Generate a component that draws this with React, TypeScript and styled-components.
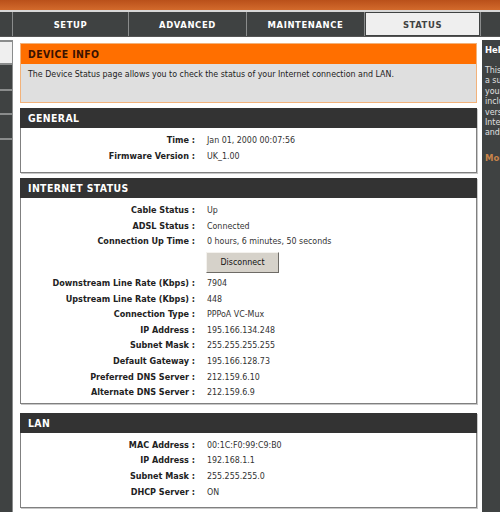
import React from "react";
import styled, { createGlobalStyle } from "styled-components";

const GlobalStyle = createGlobalStyle`
  html, body {
    margin: 0;
    padding: 0;
    background: #ffffff;
    overflow: hidden;
  }
  body {
    font-family: "DejaVu Sans Condensed", "DejaVu Sans", sans-serif;
    font-size: 8.8px;
    color: #222;
  }
`;

const Page = styled.div`
  width: 660px;
`;

const TopBar = styled.div`
  height: 10px;
  background: linear-gradient(#b9501a, #d26a2c);
  border-bottom: 2px solid #d8d8d8;
`;

const NavRow = styled.nav`
  display: grid;
  grid-template-columns: 12px 115px 117px 117px 115px 1fr;
  gap: 1px;
  height: 24px;
  background: #8a8c8c;
  border-bottom: 1px solid #555;
`;

const Tab = styled.div<{ $active?: boolean }>`
  display: flex;
  align-items: center;
  justify-content: center;
  background: ${({ $active }) => ($active ? "#efefef" : "#3f4242")};
  color: ${({ $active }) => ($active ? "#3f4242" : "#ffffff")};
  font-weight: bold;
  font-size: 9.4px;
  letter-spacing: 0.6px;
  ${({ $active }) => $active && "box-shadow: inset 0 0 0 1px #3f4242;"}
`;

const Body = styled.div`
  display: grid;
  grid-template-columns: 13px 458px 140px;
  column-gap: 6px;
  align-items: stretch;
  padding-top: 3px;
  height: 480px;
`;

const Sidebar = styled.aside`
  background: #3f4242;
  border-right: 1px solid #8a8c8c;
  display: flex;
  flex-direction: column;
`;

const SideItem = styled.div<{ $active?: boolean; $h: number }>`
  height: ${({ $h }) => $h}px;
  background: ${({ $active }) => ($active ? "#efefef" : "#3f4242")};
  border-bottom: 2px solid #8a8c8c;
  box-sizing: border-box;
`;

const Main = styled.main`
  display: flex;
  flex-direction: column;
  padding-top: 3px;
  margin-left: 1px;
`;

const Box = styled.section<{ $gap: number }>`
  margin-bottom: ${({ $gap }) => $gap}px;
  box-shadow: 1px 1px 0 #c8c8c8;
`;

const InfoBox = styled.section`
  margin-bottom: 5px;
  border: 1px solid #f2b27a;
  background: #dfdfdf;
`;

const InfoHeader = styled.h2`
  margin: 0;
  height: 20px;
  display: flex;
  align-items: center;
  padding-left: 7px;
  background: #ff6f00;
  color: #3b1200;
  font-size: 10.4px;
  letter-spacing: 0.4px;
`;

const InfoText = styled.p`
  margin: 0;
  height: 38px;
  padding: 4px 7px 0;
  box-sizing: border-box;
  line-height: 12px;
`;

const BoxHeader = styled.h2`
  margin: 0;
  height: 20px;
  display: flex;
  align-items: center;
  padding-left: 8px;
  background: #333333;
  color: #ffffff;
  font-size: 10.4px;
  letter-spacing: 0.4px;
`;

const BoxBody = styled.div<{ $pb: number }>`
  border: 1px solid #808080;
  border-top: none;
  background: #fff;
  padding: 5px 0 ${({ $pb }) => $pb}px;
  display: grid;
  grid-template-columns: 174px 1fr;
  column-gap: 12px;
`;

const Label = styled.div`
  text-align: right;
  font-weight: bold;
  font-size: 9px;
  line-height: 15.6px;
  color: #222;
`;

const Value = styled.div`
  line-height: 15.6px;
  color: #333;
`;

const ButtonCell = styled.div`
  grid-column: 2;
  padding: 2px 0 3px;
  margin-left: -1px;
`;

const Button = styled.button`
  width: 73px;
  height: 21px;
  padding: 0;
  font: inherit;
  color: #111;
  background: #d6d2ca;
  border: 1px solid;
  border-color: #f4f2ee #6e6b66 #6e6b66 #f4f2ee;
`;

const Help = styled.aside`
  background: #3f4242;
  color: #e6e6e6;
  padding: 3px 3px;
  margin-left: -1px;
`;

const HelpTitle = styled.div`
  font-weight: bold;
  font-size: 9.4px;
  color: #fff;
  line-height: 14px;
`;

const HelpText = styled.p`
  margin: 8px 0 0;
  line-height: 10.4px;
  color: #e0e0e0;
`;

const HelpMore = styled.div`
  margin-top: 14px;
  font-weight: bold;
  color: #c8844a;
  font-size: 9.4px;
`;

type Row = [string, string];

const general: Row[] = [
  ["Time :", "Jan 01, 2000 00:07:56"],
  ["Firmware Version :", "UK_1.00"],
];

const internetTop: Row[] = [
  ["Cable Status :", "Up"],
  ["ADSL Status :", "Connected"],
  ["Connection Up Time :", "0 hours, 6 minutes, 50 seconds"],
];

const internetBottom: Row[] = [
  ["Downstream Line Rate (Kbps) :", "7904"],
  ["Upstream Line Rate (Kbps) :", "448"],
  ["Connection Type :", "PPPoA VC-Mux"],
  ["IP Address :", "195.166.134.248"],
  ["Subnet Mask :", "255.255.255.255"],
  ["Default Gateway :", "195.166.128.73"],
  ["Preferred DNS Server :", "212.159.6.10"],
  ["Alternate DNS Server :", "212.159.6.9"],
];

const lan: Row[] = [
  ["MAC Address :", "00:1C:F0:99:C9:B0"],
  ["IP Address :", "192.168.1.1"],
  ["Subnet Mask :", "255.255.255.0"],
  ["DHCP Server :", "ON"],
];

const Rows: React.FC<{ rows: Row[] }> = ({ rows }) => (
  <>
    {rows.map(([label, value]) => (
      <React.Fragment key={label + value}>
        <Label>{label}</Label>
        <Value>{value}</Value>
      </React.Fragment>
    ))}
  </>
);

const App: React.FC = () => {
  return (
    <Page>
      <GlobalStyle />
      <TopBar />
      <NavRow>
        <Tab />
        <Tab>SETUP</Tab>
        <Tab>ADVANCED</Tab>
        <Tab>MAINTENANCE</Tab>
        <Tab $active>STATUS</Tab>
        <Tab />
      </NavRow>
      <Body>
        <Sidebar>
          <SideItem $h={1} />
          <SideItem $h={23} $active />
          <SideItem $h={26} />
          <SideItem $h={24} />
          <SideItem $h={25} />
        </Sidebar>
        <Main>
          <InfoBox>
            <InfoHeader>DEVICE INFO</InfoHeader>
            <InfoText>
              The Device Status page allows you to check the status of your
              Internet connection and LAN.
            </InfoText>
          </InfoBox>

          <Box $gap={5}>
            <BoxHeader>GENERAL</BoxHeader>
            <BoxBody $pb={8}>
              <Rows rows={general} />
            </BoxBody>
          </Box>

          <Box $gap={9}>
            <BoxHeader>INTERNET STATUS</BoxHeader>
            <BoxBody $pb={2}>
              <Rows rows={internetTop} />
              <ButtonCell>
                <Button type="button">Disconnect</Button>
              </ButtonCell>
              <Rows rows={internetBottom} />
            </BoxBody>
          </Box>

          <Box $gap={0}>
            <BoxHeader>LAN</BoxHeader>
            <BoxBody $pb={7}>
              <Rows rows={lan} />
            </BoxBody>
          </Box>
        </Main>
        <Help>
          <HelpTitle>Helpful Hints..</HelpTitle>
          <HelpText>
            This page displays
            <br />a summary of
            <br />your connection
            <br />including firmware
            <br />version, the
            <br />Internet settings
            <br />and LAN details.
          </HelpText>
          <HelpMore>More...</HelpMore>
        </Help>
      </Body>
    </Page>
  );
};

export default App;
